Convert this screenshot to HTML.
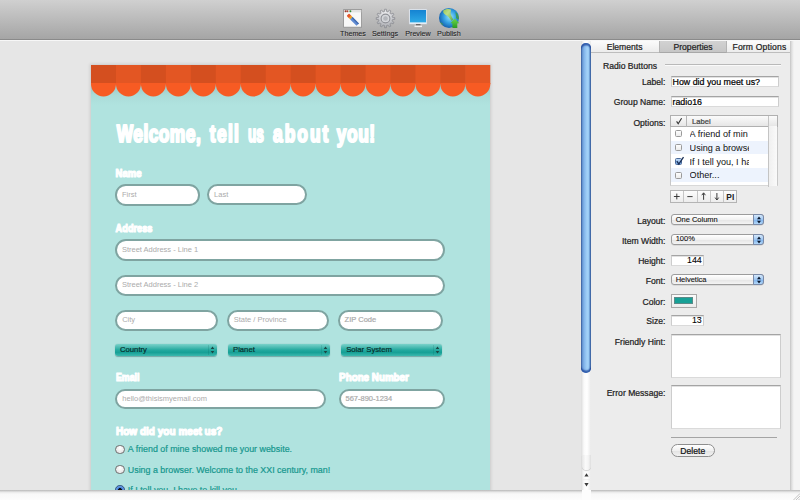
<!DOCTYPE html><html><head><meta charset="utf-8"><style>
*{box-sizing:border-box;margin:0;padding:0}
html,body{width:800px;height:500px;overflow:hidden;background:#ececec;font-family:"Liberation Sans",sans-serif}
div,span,svg{position:absolute}
.t{white-space:nowrap;transform-origin:0 0}
.p{-webkit-text-stroke:0.22px currentColor}
</style></head><body>
<div style="left:0;top:0;width:800px;height:38.5px;background:linear-gradient(#d0d0d0,#a5a5a5)"></div>
<div style="left:0;top:38.5px;width:800px;height:1.2px;background:#8a8a8a"></div>
<div style="left:0;top:39.7px;width:800px;height:1.3px;background:#f7f7f7"></div>
<div class="t p" style="left:340px;top:29.51px;font-size:7.2px;line-height:7.2px;color:#1e1e1e;-webkit-text-stroke:0.08px #1e1e1e;text-shadow:0 0.5px 0 rgba(255,255,255,.3);">Themes</div>
<div class="t p" style="left:372px;top:29.51px;font-size:7.2px;line-height:7.2px;color:#1e1e1e;-webkit-text-stroke:0.08px #1e1e1e;text-shadow:0 0.5px 0 rgba(255,255,255,.3);">Settings</div>
<div class="t p" style="left:405.2px;top:29.51px;font-size:7.2px;line-height:7.2px;color:#1e1e1e;-webkit-text-stroke:0.08px #1e1e1e;text-shadow:0 0.5px 0 rgba(255,255,255,.3);">Preview</div>
<div class="t p" style="left:437.1px;top:29.51px;font-size:7.2px;line-height:7.2px;color:#1e1e1e;-webkit-text-stroke:0.08px #1e1e1e;text-shadow:0 0.5px 0 rgba(255,255,255,.3);">Publish</div>
<svg style="left:0;top:0" width="800" height="39" viewBox="0 0 800 39">
<defs>
<radialGradient id="gear" cx="50%" cy="30%" r="75%"><stop offset="0" stop-color="#f7f7f9"/><stop offset="1" stop-color="#a0a2a8"/></radialGradient>
<linearGradient id="scr" x1="0" y1="0" x2="0" y2="1"><stop offset="0" stop-color="#1583d2"/><stop offset="1" stop-color="#2eaae6"/></linearGradient>
<radialGradient id="glb" cx="55%" cy="45%" r="60%"><stop offset="0" stop-color="#9be4fb"/><stop offset="0.5" stop-color="#35a2e4"/><stop offset="1" stop-color="#0f58a8"/></radialGradient>
<linearGradient id="cont" x1="0" y1="0" x2="1" y2="1"><stop offset="0" stop-color="#a8d048"/><stop offset="0.4" stop-color="#c8e27a"/><stop offset="1" stop-color="#5aa838"/></linearGradient>
<linearGradient id="arr" x1="0" y1="0" x2="0" y2="1"><stop offset="0" stop-color="#6ad84a"/><stop offset="1" stop-color="#2a9a22"/></linearGradient>
</defs>
<rect x="343.6" y="9.6" width="18" height="17.6" fill="#f8f8f8" stroke="#8e8e8e" stroke-width="0.8"/>
<rect x="344" y="10" width="17.2" height="2.4" fill="#e2e2e2"/>
<circle cx="345.6" cy="11.2" r="0.95" fill="#9c3a2c"/><circle cx="347.4" cy="11.2" r="0.95" fill="#b04434"/><circle cx="350.4" cy="11.2" r="0.95" fill="#2e8a34"/>
<g transform="rotate(-45 353 20)">
<rect x="351.4" y="12.6" width="3.4" height="3.4" rx="0.8" fill="#e4572c"/>
<rect x="351.4" y="15.6" width="3.4" height="2.2" fill="#eea227"/>
<rect x="351.4" y="17.6" width="3.4" height="9" fill="#5f8ad2"/>
<rect x="353.6" y="17.6" width="1.2" height="9" fill="#3f68ac"/>
</g>
<g transform="translate(385.5 18.5)">
<path d="M-0.88,-9.26 L0.88,-9.26 L1.17,-6.90 L2.44,-6.56 L3.87,-8.46 L5.39,-7.58 L4.46,-5.39 L5.39,-4.46 L7.58,-5.39 L8.46,-3.87 L6.56,-2.44 L6.90,-1.17 L9.26,-0.88 L9.26,0.88 L6.90,1.17 L6.56,2.44 L8.46,3.87 L7.58,5.39 L5.39,4.46 L4.46,5.39 L5.39,7.58 L3.87,8.46 L2.44,6.56 L1.17,6.90 L0.88,9.26 L-0.88,9.26 L-1.17,6.90 L-2.44,6.56 L-3.87,8.46 L-5.39,7.58 L-4.46,5.39 L-5.39,4.46 L-7.58,5.39 L-8.46,3.87 L-6.56,2.44 L-6.90,1.17 L-9.26,0.88 L-9.26,-0.88 L-6.90,-1.17 L-6.56,-2.44 L-8.46,-3.87 L-7.58,-5.39 L-5.39,-4.46 L-4.46,-5.39 L-5.39,-7.58 L-3.87,-8.46 L-2.44,-6.56 L-1.17,-6.90 Z" fill="url(#gear)" stroke="#86888e" stroke-width="0.7" stroke-linejoin="round"/>
<circle r="4.4" fill="#d6d8dc" stroke="#8e9096" stroke-width="1.1"/>
<circle r="2.5" fill="#b4b6bb" stroke="#d0d2d6" stroke-width="0.5"/>
</g>
<rect x="409.2" y="9.2" width="17.6" height="14.8" fill="#eef4fa" stroke="#cdd6e0" stroke-width="0.5"/>
<rect x="410" y="10" width="16" height="12.4" fill="url(#scr)"/>
<rect x="416" y="24" width="4.5" height="1.6" fill="#6a6a6a"/>
<rect x="414.5" y="25.6" width="7.5" height="1.5" fill="#f2f2f2"/>
<circle cx="449" cy="17.9" r="10" fill="url(#glb)"/>
<path d="M443.2,10.6 C445.2,8.9 448.6,8.4 450.8,9.4 C451.2,11 450.2,12.6 450.8,14.4 C451.4,16 452.4,17.6 453.2,19.6 L451.6,21 C450.4,19.4 449.4,18 448.4,16.8 C446.8,15.6 444.6,14.6 443.4,12.8 Z" fill="url(#cont)" opacity="0.9"/><path d="M455.5,11.8 C457.6,13.5 458.8,16 458.9,19 C457.8,19.6 456.6,19 456,17.8 C456.2,15.8 455.4,13.6 455.5,11.8 Z" fill="#3f9c40" opacity="0.85"/>
<path d="M440.2,21.5 C441,22.5 442.2,23.6 443.6,24.2 C443,25 441.8,24.6 441,23.6 Z" fill="#4aa040"/>
<path d="M454.8,18.6 L459.3,23.3 L457.3,23.3 L457.3,28 L452.4,28 L452.4,23.3 L450.4,23.3 Z" fill="url(#arr)"/>
</svg>
<div style="left:0;top:41px;width:581px;height:449px;background:#e6e6e6"></div>
<div style="left:0;top:41px;width:581px;height:449px;overflow:hidden">
<div style="left:91px;top:23.5px;width:399.3px;height:500px;background:#b0e3df;box-shadow:0 0 3px 1px rgba(0,0,0,.12)"></div>
<div style="left:91px;top:41.5px;width:399.3px;height:22px;background:linear-gradient(rgba(120,150,150,.42),rgba(150,190,188,.2) 55%,rgba(176,227,223,0))"></div>
<svg style="left:91px;top:23.5px;overflow:visible" width="399.3" height="40" viewBox="0 0 399.3 40"><rect x="0" y="18.3" width="399.3" height="0.9" fill="#f75b23"/><rect x="0.000" y="0" width="25.556" height="18.6" fill="#d44f1f"/><rect x="24.956" y="0" width="25.556" height="18.6" fill="#e35623"/><rect x="49.913" y="0" width="25.556" height="18.6" fill="#d44f1f"/><rect x="74.869" y="0" width="25.556" height="18.6" fill="#e35623"/><rect x="99.825" y="0" width="25.556" height="18.6" fill="#d44f1f"/><rect x="124.781" y="0" width="25.556" height="18.6" fill="#e35623"/><rect x="149.738" y="0" width="25.556" height="18.6" fill="#d44f1f"/><rect x="174.694" y="0" width="25.556" height="18.6" fill="#e35623"/><rect x="199.650" y="0" width="25.556" height="18.6" fill="#d44f1f"/><rect x="224.606" y="0" width="25.556" height="18.6" fill="#e35623"/><rect x="249.562" y="0" width="25.556" height="18.6" fill="#d44f1f"/><rect x="274.519" y="0" width="25.556" height="18.6" fill="#e35623"/><rect x="299.475" y="0" width="25.556" height="18.6" fill="#d44f1f"/><rect x="324.431" y="0" width="25.556" height="18.6" fill="#e35623"/><rect x="349.387" y="0" width="25.556" height="18.6" fill="#d44f1f"/><rect x="374.344" y="0" width="24.956" height="18.6" fill="#e35623"/><path d="M0.000,18 H24.956 V19 A12.478,12.5 0 0 1 0.000,19 Z" fill="#f75b23"/><path d="M24.956,18 H49.913 V19 A12.478,12.5 0 0 1 24.956,19 Z" fill="#f75b23"/><path d="M49.913,18 H74.869 V19 A12.478,12.5 0 0 1 49.913,19 Z" fill="#f75b23"/><path d="M74.869,18 H99.825 V19 A12.478,12.5 0 0 1 74.869,19 Z" fill="#f75b23"/><path d="M99.825,18 H124.781 V19 A12.478,12.5 0 0 1 99.825,19 Z" fill="#f75b23"/><path d="M124.781,18 H149.738 V19 A12.478,12.5 0 0 1 124.781,19 Z" fill="#f75b23"/><path d="M149.738,18 H174.694 V19 A12.478,12.5 0 0 1 149.738,19 Z" fill="#f75b23"/><path d="M174.694,18 H199.650 V19 A12.478,12.5 0 0 1 174.694,19 Z" fill="#f75b23"/><path d="M199.650,18 H224.606 V19 A12.478,12.5 0 0 1 199.650,19 Z" fill="#f75b23"/><path d="M224.606,18 H249.563 V19 A12.478,12.5 0 0 1 224.606,19 Z" fill="#f75b23"/><path d="M249.562,18 H274.519 V19 A12.478,12.5 0 0 1 249.562,19 Z" fill="#f75b23"/><path d="M274.519,18 H299.475 V19 A12.478,12.5 0 0 1 274.519,19 Z" fill="#f75b23"/><path d="M299.475,18 H324.431 V19 A12.478,12.5 0 0 1 299.475,19 Z" fill="#f75b23"/><path d="M324.431,18 H349.388 V19 A12.478,12.5 0 0 1 324.431,19 Z" fill="#f75b23"/><path d="M349.387,18 H374.344 V19 A12.478,12.5 0 0 1 349.387,19 Z" fill="#f75b23"/><path d="M374.344,18 H399.300 V19 A12.478,12.5 0 0 1 374.344,19 Z" fill="#f75b23"/></svg>
<svg style="left:0;top:0;overflow:visible" width="1" height="1">
<text transform="translate(116.70 101.30) scale(0.740 1)" x="0" y="0" font-family="Liberation Sans" font-weight="bold" font-size="23.5" letter-spacing="0.625" fill="#fff" stroke="#fff" stroke-width="2.20" stroke-linejoin="round">Welcome,</text>
<text transform="translate(209.85 101.30) scale(0.740 1)" x="0" y="0" font-family="Liberation Sans" font-weight="bold" font-size="23.5" letter-spacing="1.766" fill="#fff" stroke="#fff" stroke-width="2.20" stroke-linejoin="round">tell</text>
<text transform="translate(248.00 101.30) scale(0.581 1)" x="0" y="0" font-family="Liberation Sans" font-weight="bold" font-size="23.5" letter-spacing="0.000" fill="#fff" stroke="#fff" stroke-width="2.20" stroke-linejoin="round">us</text>
<text transform="translate(273.00 101.30) scale(0.740 1)" x="0" y="0" font-family="Liberation Sans" font-weight="bold" font-size="23.5" letter-spacing="2.702" fill="#fff" stroke="#fff" stroke-width="2.20" stroke-linejoin="round">about</text>
<text transform="translate(336.70 101.30) scale(0.740 1)" x="0" y="0" font-family="Liberation Sans" font-weight="bold" font-size="23.5" letter-spacing="0.791" fill="#fff" stroke="#fff" stroke-width="2.20" stroke-linejoin="round">you!</text>
</svg>
<svg style="left:0;top:0;overflow:visible" width="1" height="1">
<text transform="translate(115.60 135.80) scale(0.837 1)" x="0" y="0" font-family="Liberation Sans" font-weight="bold" font-size="11.4" letter-spacing="0.000" fill="#fff" stroke="#fff" stroke-width="1.20" stroke-linejoin="round">Name</text>
</svg>
<div style="left:115px;top:143px;width:85px;height:21.5px;background:#fff;border:2.5px solid #7fa4a1;border-radius:10.75px"></div>
<div class="t" style="left:122px;top:149.80px;font-size:7.5px;line-height:7.5px;color:#ababab;">First</div>
<div style="left:207.1px;top:143.2px;width:99.6px;height:21.200000000000017px;background:#fff;border:2.5px solid #7fa4a1;border-radius:10.600000000000009px"></div>
<div class="t" style="left:214.1px;top:149.85px;font-size:7.5px;line-height:7.5px;color:#ababab;">Last</div>
<svg style="left:0;top:0;overflow:visible" width="1" height="1">
<text transform="translate(115.60 191.30) scale(0.809 1)" x="0" y="0" font-family="Liberation Sans" font-weight="bold" font-size="11.4" letter-spacing="0.000" fill="#fff" stroke="#fff" stroke-width="1.20" stroke-linejoin="round">Address</text>
</svg>
<div style="left:114.9px;top:198.2px;width:330.20000000000005px;height:21.900000000000034px;background:#fff;border:2.5px solid #7fa4a1;border-radius:10.950000000000017px"></div>
<div class="t" style="left:121.9px;top:205.20px;font-size:7.5px;line-height:7.5px;color:#ababab;">Street Address - Line 1</div>
<div style="left:114.9px;top:233.5px;width:330.20000000000005px;height:21.80000000000001px;background:#fff;border:2.5px solid #7fa4a1;border-radius:10.900000000000006px"></div>
<div class="t" style="left:121.9px;top:240.45px;font-size:7.5px;line-height:7.5px;color:#ababab;">Street Address - Line 2</div>
<div style="left:115.2px;top:268.8px;width:102.39999999999999px;height:21.0px;background:#fff;border:2.5px solid #7fa4a1;border-radius:10.5px"></div>
<div class="t" style="left:122.2px;top:275.35px;font-size:7.5px;line-height:7.5px;color:#ababab;">City</div>
<div style="left:226.7px;top:268.8px;width:102.19999999999999px;height:21.0px;background:#fff;border:2.5px solid #7fa4a1;border-radius:10.5px"></div>
<div class="t" style="left:233.7px;top:275.35px;font-size:7.5px;line-height:7.5px;color:#ababab;">State / Province</div>
<div style="left:337.6px;top:268.8px;width:105.79999999999995px;height:21.0px;background:#fff;border:2.5px solid #7fa4a1;border-radius:10.5px"></div>
<div class="t p" style="left:344.6px;top:275.35px;font-size:7.5px;line-height:7.5px;color:#ababab;">ZIP Code</div>
<div style="left:115px;top:303.3px;width:101.69999999999999px;height:11.5px;border-radius:3px;background:linear-gradient(#7ad2ca,#24a99f 50%,#16a096 70%,#3cb8ae);box-shadow:0 0.5px 1px rgba(0,60,60,.35)"></div>
<div style="left:207.7px;top:304.3px;width:1px;height:9.5px;background:rgba(0,80,75,.15)"></div>
<svg style="left:209.7px;top:305.3px" width="5" height="8" viewBox="0 0 5 8"><path d="M2.5,0.5 L4.3,3 L0.7,3 Z M2.5,7.5 L4.3,5 L0.7,5 Z" fill="#1a4744"/></svg>
<div class="t" style="left:120px;top:304.88px;font-size:7.7px;line-height:7.7px;color:#06302d;-webkit-text-stroke:0.2px #06302d;">Country</div>
<div style="left:228px;top:303.3px;width:102px;height:11.5px;border-radius:3px;background:linear-gradient(#7ad2ca,#24a99f 50%,#16a096 70%,#3cb8ae);box-shadow:0 0.5px 1px rgba(0,60,60,.35)"></div>
<div style="left:321px;top:304.3px;width:1px;height:9.5px;background:rgba(0,80,75,.15)"></div>
<svg style="left:323px;top:305.3px" width="5" height="8" viewBox="0 0 5 8"><path d="M2.5,0.5 L4.3,3 L0.7,3 Z M2.5,7.5 L4.3,5 L0.7,5 Z" fill="#1a4744"/></svg>
<div class="t" style="left:233px;top:304.88px;font-size:7.7px;line-height:7.7px;color:#06302d;-webkit-text-stroke:0.2px #06302d;">Planet</div>
<div style="left:341.2px;top:303.3px;width:100.60000000000002px;height:11.5px;border-radius:3px;background:linear-gradient(#7ad2ca,#24a99f 50%,#16a096 70%,#3cb8ae);box-shadow:0 0.5px 1px rgba(0,60,60,.35)"></div>
<div style="left:432.8px;top:304.3px;width:1px;height:9.5px;background:rgba(0,80,75,.15)"></div>
<svg style="left:434.8px;top:305.3px" width="5" height="8" viewBox="0 0 5 8"><path d="M2.5,0.5 L4.3,3 L0.7,3 Z M2.5,7.5 L4.3,5 L0.7,5 Z" fill="#1a4744"/></svg>
<div class="t p" style="left:346.2px;top:304.88px;font-size:7.7px;line-height:7.7px;color:#06302d;-webkit-text-stroke:0.2px #06302d;">Solar System</div>
<svg style="left:0;top:0;overflow:visible" width="1" height="1">
<text transform="translate(115.90 340.20) scale(0.775 1)" x="0" y="0" font-family="Liberation Sans" font-weight="bold" font-size="11.4" letter-spacing="0.000" fill="#fff" stroke="#fff" stroke-width="1.20" stroke-linejoin="round">Email</text>
</svg>
<svg style="left:0;top:0;overflow:visible" width="1" height="1">
<text transform="translate(339.10 340.20) scale(0.862 1)" x="0" y="0" font-family="Liberation Sans" font-weight="bold" font-size="11.4" letter-spacing="0.000" fill="#fff" stroke="#fff" stroke-width="1.20" stroke-linejoin="round">Phone Number</text>
</svg>
<div style="left:115.3px;top:347.7px;width:210.89999999999998px;height:20.0px;background:#fff;border:2.5px solid #7fa4a1;border-radius:10.0px"></div>
<div class="t" style="left:122.3px;top:353.75px;font-size:7.5px;line-height:7.5px;color:#ababab;">hello@thisismyemail.com</div>
<div style="left:338.5px;top:347.5px;width:106.80000000000001px;height:20.80000000000001px;background:#fff;border:2.5px solid #7fa4a1;border-radius:10.400000000000006px"></div>
<div class="t p" style="left:345.5px;top:353.95px;font-size:7.5px;line-height:7.5px;color:#ababab;">567-890-1234</div>
<svg style="left:0;top:0;overflow:visible" width="1" height="1">
<text transform="translate(115.90 393.60) scale(0.882 1)" x="0" y="0" font-family="Liberation Sans" font-weight="bold" font-size="11.4" letter-spacing="0.000" fill="#fff" stroke="#fff" stroke-width="1.20" stroke-linejoin="round">How did you meet us?</text>
</svg>
<div style="left:115.4px;top:403.6px;width:9.6px;height:9.6px;border-radius:50%;border:0.8px solid #6f6f6f;background:radial-gradient(circle at 50% 30%,#fff,#dcdcdc)"></div>
<div class="t" style="left:127.8px;top:404.37px;font-size:8.9px;line-height:8.9px;color:#16978e;-webkit-text-stroke:0.2px #16978e;">A friend of mine showed me your website.</div>
<div style="left:115.4px;top:423.8px;width:9.6px;height:9.6px;border-radius:50%;border:0.8px solid #6f6f6f;background:radial-gradient(circle at 50% 30%,#fff,#dcdcdc)"></div>
<div class="t" style="left:127.8px;top:424.77px;font-size:8.9px;line-height:8.9px;color:#16978e;-webkit-text-stroke:0.2px #16978e;">Using a browser. Welcome to the XXI century, man!</div>
<div style="left:115.4px;top:444.2px;width:9.6px;height:9.6px;border-radius:50%;border:0.8px solid #2a4a80;background:radial-gradient(circle at 50% 50%,#111 0 1.6px,#3f7fd8 2.2px,#9cc6f4)"></div>
<div class="t" style="left:127.8px;top:445.17px;font-size:8.9px;line-height:8.9px;color:#16978e;-webkit-text-stroke:0.2px #16978e;">If I tell you, I have to kill you.</div>
</div>
<div style="left:0;top:490px;width:800px;height:10px;background:linear-gradient(#b6b6b6,#d4d4d4 1.2px,#ececec 2.5px,#f8f8f8 4px,#fcfcfc)"></div>
<div style="left:582px;top:490px;width:9px;height:10px;background:#fdfdfd"></div>
<div style="left:581px;top:41px;width:10px;height:449px;background:linear-gradient(90deg,#dcdcdc,#fafafa 30%,#ffffff 60%,#eaeaea)"></div>
<div style="left:581px;top:43px;width:9.6px;height:329.6px;border-radius:4.8px;background:linear-gradient(90deg,#4f6f9f,#6b9ad6 14%,#86b8ec 35%,#a4d2f8 62%,#98caf4 78%,#5a86c0 92%,#4a6898);box-shadow:inset 0 2.5px 1.5px rgba(20,60,150,.75),inset 0 -2.5px 1.5px rgba(20,60,150,.75)"></div>
<div style="left:581.5px;top:455px;width:9px;height:15px;border-radius:0 0 4.5px 4.5px;background:linear-gradient(90deg,#e6e6e6,#fafafa 40%,#f4f4f4 70%,#dedede);box-shadow:0 1px 1px rgba(0,0,0,.18)"></div>
<svg style="left:581px;top:470px" width="10" height="20" viewBox="0 0 10 20"><path d="M5.5,3.2 L7.6,6.6 L3.4,6.6 Z M5.5,16.4 L7.6,13 L3.4,13 Z" fill="#3a3a3a"/><rect x="2" y="9.6" width="7" height="0.5" fill="#e2e2e2"/></svg>
<div style="left:591px;top:41px;width:199px;height:449px;background:#ececec"></div>
<div style="left:790px;top:41px;width:10px;height:449px;background:linear-gradient(90deg,#c0c0c0,#d6d6d6 1px,#ececec 3px,#f4f4f4 4px)"></div>
<div style="left:591px;top:41px;width:199px;height:11.5px;background:linear-gradient(#fbfbfb,#ececec);border-bottom:1px solid #bdbdbd"></div>
<div style="left:658.5px;top:41px;width:68.5px;height:11.5px;background:linear-gradient(#d2d2d2,#c6c6c6);border-left:1px solid #b4b4b4;border-right:1px solid #b4b4b4;border-bottom:1px solid #a8a8a8"></div>
<div class="t p" style="left:606.7px;top:42.52px;font-size:8.6px;line-height:8.6px;color:#222;">Elements</div>
<div class="t p" style="left:673.5px;top:42.52px;font-size:8.6px;line-height:8.6px;color:#222;">Properties</div>
<div class="t p" style="left:732.5px;top:42.52px;font-size:8.6px;line-height:8.6px;color:#222;letter-spacing:0.15px;">Form Options</div>
<div class="t p" style="left:603px;top:61.72px;font-size:8.6px;line-height:8.6px;color:#222;">Radio Buttons</div>
<div style="left:664.5px;top:64px;width:116.5px;height:1px;background:#b9b9b9"></div>
<div style="left:664.5px;top:65px;width:116.5px;height:1px;background:#fafafa"></div>
<div class="t p" style="left:365.4px;top:78.22px;font-size:8.6px;line-height:8.6px;color:#222;width:300px;text-align:right;">Label:</div>
<div style="left:670.5px;top:75.5px;width:108.5px;height:11.5px;background:#fff;border:1px solid #cdcdcd;border-top-color:#a4a4a4;border-bottom-color:#dadada;box-shadow:inset 0 0.6px 0 #c4c4c4"></div>
<div class="t p" style="left:672.5px;top:78.01px;font-size:8.85px;line-height:8.85px;color:#000;">How did you meet us?</div>
<div class="t p" style="left:365.4px;top:98.22px;font-size:8.6px;line-height:8.6px;color:#222;width:300px;text-align:right;">Group Name:</div>
<div style="left:670.5px;top:95.5px;width:108.5px;height:11.5px;background:#fff;border:1px solid #cdcdcd;border-top-color:#a4a4a4;border-bottom-color:#dadada;box-shadow:inset 0 0.6px 0 #c4c4c4"></div>
<div class="t p" style="left:672.5px;top:98.01px;font-size:8.85px;line-height:8.85px;color:#000;">radio16</div>
<div class="t p" style="left:365.4px;top:118.72px;font-size:8.6px;line-height:8.6px;color:#222;width:300px;text-align:right;">Options:</div>
<div style="left:670.4px;top:115.1px;width:107.2px;height:71px;background:#fff;border:1px solid #c8c8c8;border-bottom-color:#d8d8d8"></div>
<div style="left:670.4px;top:115.1px;width:107.2px;height:11.5px;background:linear-gradient(#fbfbfb,#e6e6e6);border:1px solid #b0b0b0"></div>
<div style="left:686.2px;top:115.5px;width:1px;height:11px;background:#b6b6b6"></div>
<svg style="left:674px;top:117px" width="10" height="9" viewBox="0 0 10 9"><path d="M2.6,4.4 L4.2,6.8 L7.6,1.2" fill="none" stroke="#333" stroke-width="1.1"/></svg>
<div style="left:768.4px;top:115.5px;width:1px;height:71px;background:#c4c4c4"></div>
<div style="left:769.4px;top:126px;width:7.2px;height:59.5px;background:linear-gradient(90deg,#f0f0f0,#fafafa)"></div>
<div class="t p" style="left:692px;top:118.17px;font-size:7.6px;line-height:7.6px;color:#444;">Label</div>
<div style="left:674.8px;top:130.4px;width:7.2px;height:7px;border:0.9px solid #9a9a9a;border-radius:1.5px;background:linear-gradient(#fdfdfd,#ececec)"></div>
<div style="left:689.6px;top:126.6px;width:59px;height:14px;overflow:hidden">
<div class="t" style="left:0px;top:3.70px;font-size:9.1px;line-height:9.1px;color:#111;">A friend of min</div>
</div>
<div style="left:671.4px;top:140.5px;width:97px;height:13.9px;background:#edf3fd"></div>
<div style="left:674.8px;top:144.3px;width:7.2px;height:7px;border:0.9px solid #9a9a9a;border-radius:1.5px;background:linear-gradient(#fdfdfd,#ececec)"></div>
<div style="left:689.6px;top:140.5px;width:59px;height:14px;overflow:hidden">
<div class="t" style="left:0px;top:3.40px;font-size:9.1px;line-height:9.1px;color:#111;">Using a browse</div>
</div>
<div style="left:674.8px;top:158.20000000000002px;width:7.2px;height:7px;border:0.9px solid #4a6a9a;border-radius:1.5px;background:linear-gradient(#c4dcf6,#74a6e4)"></div>
<svg style="left:675px;top:156.0px" width="10" height="10" viewBox="0 0 10 10"><path d="M1.8,5.2 L3.8,8 L8.5,1.2" fill="none" stroke="#1b2f55" stroke-width="1.3"/></svg>
<div style="left:689.6px;top:154.4px;width:59px;height:14px;overflow:hidden">
<div class="t" style="left:0px;top:3.30px;font-size:9.1px;line-height:9.1px;color:#111;">If I tell you, I ha</div>
</div>
<div style="left:671.4px;top:168.3px;width:97px;height:13.9px;background:#edf3fd"></div>
<div style="left:674.8px;top:172.10000000000002px;width:7.2px;height:7px;border:0.9px solid #9a9a9a;border-radius:1.5px;background:linear-gradient(#fdfdfd,#ececec)"></div>
<div style="left:689.6px;top:168.3px;width:59px;height:14px;overflow:hidden">
<div class="t" style="left:0px;top:3.00px;font-size:9.1px;line-height:9.1px;color:#111;">Other...</div>
</div>
<div style="left:670.3px;top:190.3px;width:66.7px;height:12.4px;background:linear-gradient(#fdfdfd,#ececec);border:1px solid #b4b4b4"></div>
<div style="left:683.1px;top:191px;width:1px;height:11px;background:#c6c6c6"></div>
<div style="left:696.5px;top:191px;width:1px;height:11px;background:#c6c6c6"></div>
<div style="left:709.8px;top:191px;width:1px;height:11px;background:#c6c6c6"></div>
<div style="left:723.1px;top:191px;width:1px;height:11px;background:#c6c6c6"></div>
<svg style="left:670px;top:190px" width="68" height="13" viewBox="0 0 68 13"><path d="M6.8,3.6 V9.4 M3.9,6.5 H9.7" stroke="#333" stroke-width="0.95"/><path d="M17.3,6.6 H22.6" stroke="#333" stroke-width="0.95"/><path d="M33.6,3.2 V9.8 M31.8,5.2 L33.6,2.8 L35.4,5.2" stroke="#333" stroke-width="0.95" fill="none"/><path d="M46.9,3.0 V9.6 M45.1,7.6 L46.9,10 L48.7,7.6" stroke="#333" stroke-width="0.95" fill="none"/></svg>
<div class="t p" style="left:723.6px;top:193.49px;font-size:8.4px;line-height:8.4px;color:#222;width:13.4px;text-align:center;font-weight:bold;-webkit-text-stroke:0;">PI</div>
<div class="t p" style="left:365.4px;top:217.42px;font-size:8.6px;line-height:8.6px;color:#222;width:300px;text-align:right;">Layout:</div>
<div style="left:670.6px;top:214px;width:93.1px;height:11.300000000000011px;background:linear-gradient(#ffffff,#f2f2f2 50%,#e4e4e4 51%,#f4f4f4);border:1px solid #9c9c9c;border-radius:3px;box-shadow:0 0.5px 0.5px rgba(0,0,0,.15)"></div>
<div style="left:753.3px;top:214px;width:10.4px;height:11.300000000000011px;background:linear-gradient(#d6e9fb,#9dc6f2 50%,#7ab0ec 51%,#b4d8f8);border:1px solid #7a8aa8;border-radius:0 3px 3px 0"></div>
<svg style="left:755.5px;top:215.5px" width="6" height="8" viewBox="0 0 6 8"><path d="M3,0.6 L5,3.2 L1,3.2 Z M3,7.4 L5,4.8 L1,4.8 Z" fill="#0c1a30"/></svg>
<div class="t p" style="left:675.7px;top:215.55px;font-size:7.5px;line-height:7.5px;color:#111;-webkit-text-stroke:0.1px #111;">One Column</div>
<div class="t p" style="left:365.4px;top:237.22px;font-size:8.6px;line-height:8.6px;color:#222;width:300px;text-align:right;">Item Width:</div>
<div style="left:670.6px;top:234px;width:93.1px;height:10.800000000000011px;background:linear-gradient(#ffffff,#f2f2f2 50%,#e4e4e4 51%,#f4f4f4);border:1px solid #9c9c9c;border-radius:3px;box-shadow:0 0.5px 0.5px rgba(0,0,0,.15)"></div>
<div style="left:753.3px;top:234px;width:10.4px;height:10.800000000000011px;background:linear-gradient(#d6e9fb,#9dc6f2 50%,#7ab0ec 51%,#b4d8f8);border:1px solid #7a8aa8;border-radius:0 3px 3px 0"></div>
<svg style="left:755.5px;top:235.5px" width="6" height="8" viewBox="0 0 6 8"><path d="M3,0.6 L5,3.2 L1,3.2 Z M3,7.4 L5,4.8 L1,4.8 Z" fill="#0c1a30"/></svg>
<div class="t p" style="left:675.7px;top:235.05px;font-size:7.5px;line-height:7.5px;color:#111;-webkit-text-stroke:0.1px #111;">100%</div>
<div class="t p" style="left:365.4px;top:257.22px;font-size:8.6px;line-height:8.6px;color:#222;width:300px;text-align:right;">Height:</div>
<div style="left:670.6px;top:255px;width:33.299999999999955px;height:11px;background:#fff;border:1px solid #cdcdcd;border-top-color:#a4a4a4;border-bottom-color:#dadada;box-shadow:inset 0 0.6px 0 #c4c4c4"></div>
<div class="t p" style="left:401.79999999999995px;top:256.21px;font-size:8.85px;line-height:8.85px;color:#000;width:300px;text-align:right;-webkit-text-stroke:0.1px #000;">144</div>
<div class="t p" style="left:365.4px;top:277.22px;font-size:8.6px;line-height:8.6px;color:#222;width:300px;text-align:right;">Font:</div>
<div style="left:670.6px;top:274px;width:93.1px;height:11px;background:linear-gradient(#ffffff,#f2f2f2 50%,#e4e4e4 51%,#f4f4f4);border:1px solid #9c9c9c;border-radius:3px;box-shadow:0 0.5px 0.5px rgba(0,0,0,.15)"></div>
<div style="left:753.3px;top:274px;width:10.4px;height:11px;background:linear-gradient(#d6e9fb,#9dc6f2 50%,#7ab0ec 51%,#b4d8f8);border:1px solid #7a8aa8;border-radius:0 3px 3px 0"></div>
<svg style="left:755.5px;top:275.5px" width="6" height="8" viewBox="0 0 6 8"><path d="M3,0.6 L5,3.2 L1,3.2 Z M3,7.4 L5,4.8 L1,4.8 Z" fill="#0c1a30"/></svg>
<div class="t p" style="left:675.7px;top:275.85px;font-size:7.5px;line-height:7.5px;color:#111;-webkit-text-stroke:0.1px #111;">Helvetica</div>
<div class="t p" style="left:365.4px;top:297.52px;font-size:8.6px;line-height:8.6px;color:#222;width:300px;text-align:right;">Color:</div>
<div style="left:670.6px;top:294px;width:26px;height:13.7px;background:linear-gradient(#fbfbfb,#ececec);border:1px solid #a8a8a8"></div>
<div style="left:673.7px;top:297.3px;width:19.8px;height:7px;background:#17a096;border:0.5px solid #5a8a88"></div>
<div class="t p" style="left:365.4px;top:317.02px;font-size:8.6px;line-height:8.6px;color:#222;width:300px;text-align:right;">Size:</div>
<div style="left:670.6px;top:314.7px;width:33.299999999999955px;height:11.300000000000011px;background:#fff;border:1px solid #cdcdcd;border-top-color:#a4a4a4;border-bottom-color:#dadada;box-shadow:inset 0 0.6px 0 #c4c4c4"></div>
<div class="t p" style="left:401.79999999999995px;top:316.01px;font-size:8.85px;line-height:8.85px;color:#000;width:300px;text-align:right;-webkit-text-stroke:0.1px #000;">13</div>
<div class="t p" style="left:365.4px;top:337.97px;font-size:8.6px;line-height:8.6px;color:#222;width:300px;text-align:right;">Friendly Hint:</div>
<div style="left:670.5px;top:333.75px;width:110.3px;height:43.75px;background:#fff;border:1px solid #cdcdcd;border-top-color:#a4a4a4;border-bottom-color:#dadada;box-shadow:inset 0 0.6px 0 #c4c4c4"></div>
<div class="t p" style="left:365.4px;top:388.72px;font-size:8.6px;line-height:8.6px;color:#222;width:300px;text-align:right;">Error Message:</div>
<div style="left:670.5px;top:385.2px;width:110.3px;height:44.1px;background:#fff;border:1px solid #cdcdcd;border-top-color:#a4a4a4;border-bottom-color:#dadada;box-shadow:inset 0 0.6px 0 #c4c4c4"></div>
<div style="left:670.5px;top:436.5px;width:106.8px;height:1px;background:#a4a4a4"></div>
<div style="left:670.5px;top:444px;width:44.5px;height:13px;border-radius:6.5px;background:linear-gradient(#ffffff,#f0f0f0 50%,#e2e2e2 51%,#f2f2f2);border:1px solid #8e8e8e"></div>
<div class="t p" style="left:670.5px;top:447.22px;font-size:8.6px;line-height:8.6px;color:#111;width:44.5px;text-align:center;">Delete</div>
<svg style="left:790px;top:490px" width="10" height="10" viewBox="0 0 10 10"><path d="M10,3.5 L3.5,10 M10,6 L6,10 M10,8.5 L8.5,10" stroke="#9c9c9c" stroke-width="0.6"/></svg>
</body></html>
